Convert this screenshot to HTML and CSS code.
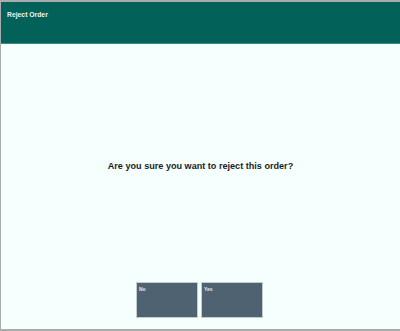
FILE: index.html
```html
<!DOCTYPE html>
<html lang="en">
<head>
    <meta charset="UTF-8">
    <meta name="viewport" content="width=device-width, initial-scale=1.0">
    <title>Reject Order</title>
    <link rel="stylesheet" href="styles.css">
</head>
<body>
    <div class="screen">
        <div class="header">
            <span class="title">Reject Order</span>
        </div>
        <div class="content">
            <p class="question">Are you sure you want to reject this order?</p>
            <div class="buttons">
                <button class="choice">No</button>
                <button class="choice">Yes</button>
            </div>
        </div>
    </div>
</body>
</html>
```

FILE: styles.css
```css
body {
    margin: 0;
    font-family: "Liberation Sans", Arial, sans-serif;
    background-color: #a9acab;
}
.screen {
    width: 399px;
    height: 327px;
    margin-top: 2px;
    margin-left: 1px;
    display: flex;
    flex-direction: column;
    background-color: #f5fffd;
}
.header {
    height: 42px;
    background-color: #02625a;
    border-bottom: 1px solid #3d8a82;
    padding: 1px 6px 0;
    box-sizing: border-box;
}
.title {
    color: #eef3f2;
    font-size: 6.8px;
    font-weight: bold;
}
.content {
    flex: 1;
    display: flex;
    flex-direction: column;
    align-items: center;
}
.question {
    margin: 117px 0 0;
    font-size: 9.1px;
    font-weight: bold;
    color: #1c1c1c;
}
.buttons {
    display: flex;
    gap: 3px;
    margin-top: 111px;
    margin-right: 2px;
}
.choice {
    width: 62px;
    height: 36px;
    padding: 3px 2px;
    border: 1px solid #c4ccd0;
    background-color: #4f6272;
    color: #e8ecee;
    font-family: inherit;
    font-size: 5px;
    font-weight: bold;
    text-align: left;
    display: flex;
    align-items: flex-start;
}
```
